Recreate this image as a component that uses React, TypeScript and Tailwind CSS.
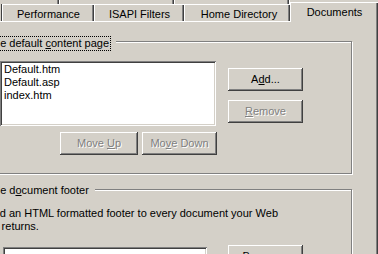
type BtnProps = {
  children: React.ReactNode;
  disabled?: boolean;
  className?: string;
};

function Button({ children, disabled, className = "" }: BtnProps) {
  return (
    <div
      className={`flex h-[23px] items-center justify-center bg-[#d4d0c8] leading-[13px] shadow-[inset_-1px_-1px_#404040,inset_1px_1px_#ffffff,inset_-2px_-2px_#808080] ${
        disabled ? "text-[#808080] [text-shadow:1px_1px_0_#ffffff]" : "text-black"
      } ${className}`}
    >
      <span>{children}</span>
    </div>
  );
}

function Tab({ label, className = "" }: { label: string; className?: string }) {
  return (
    <div
      className={`h-[18px] border-t border-b border-l border-white pt-[3px] text-center leading-[12px] shadow-[inset_-1px_0_#404040,inset_-2px_0_#808080] ${className}`}
    >
      {label}
    </div>
  );
}

export default function App() {
  return (
    <div className="h-[254px] w-[378px] overflow-hidden bg-[#d4d0c8] font-['Liberation_Sans',Arial,sans-serif] text-[11px] text-black">
      {/* back row of tabs */}
      <div className="flex h-[4px]">
        <div className="w-[59px] shadow-[inset_-1px_0_#404040,inset_-2px_0_#808080]" />
        <div className="w-[115px] border-l border-white shadow-[inset_-1px_0_#404040,inset_-2px_0_#808080]" />
        <div className="w-[115px] border-l border-white shadow-[inset_-1px_0_#404040,inset_-2px_0_#808080]" />
        <div className="flex-1 border-l border-white" />
      </div>

      {/* front row */}
      <div className="flex h-[18px] items-end">
        <div className="h-[18px] w-[2px] border-b border-white shadow-[inset_-1px_0_#404040]" />
        <Tab label="Performance" className="w-[92px]" />
        <Tab label="ISAPI Filters" className="w-[90px]" />
        <Tab label="Home Directory" className="w-[106px] pl-[3px]" />
        <div className="relative z-10 h-[20px] w-[88px] border-t border-l border-white bg-[#d4d0c8] pt-[3px] text-center leading-[12px] shadow-[inset_-1px_0_#404040,inset_-2px_0_#808080]">
          Documents
        </div>
      </div>

      {/* panel */}
      <div className="h-[232px] pt-[19px] shadow-[inset_-1px_0_#404040,inset_-2px_0_#808080]">
        {/* default content page */}
        <div className="relative -ml-[10px] w-[362px] border border-[#808080] pb-[18px] pl-[9px] pt-[19px] shadow-[inset_1px_1px_#ffffff,1px_1px_#ffffff]">
          <div className="absolute left-[-21px] top-[-6px] bg-[#d4d0c8] pr-[5px]">
            <span className="block border border-dotted border-black pl-[1px] pr-[1px] leading-[13px]">
              Enable default <u>c</u>ontent page
            </span>
          </div>

          <div className="flex items-start">
            <div className="h-[65px] w-[216px] bg-white pl-[4px] pt-[2px] leading-[13px] shadow-[inset_1px_1px_#808080,inset_-1px_-1px_#ffffff,inset_2px_2px_#404040,inset_-2px_-2px_#d4d0c8]">
              <div>Default.htm</div>
              <div>Default.asp</div>
              <div>index.htm</div>
            </div>
            <div className="ml-[12px] mt-[7px] flex flex-col gap-[9px]">
              <Button className="w-[75px]">
                A<u>d</u>d...
              </Button>
              <Button disabled className="w-[75px]">
                <u>R</u>emove
              </Button>
            </div>
          </div>

          <div className="mt-[6px] flex">
            <Button disabled className="ml-[60px] w-[78px]">
              Move <u>U</u>p
            </Button>
            <Button disabled className="ml-[4px] w-[75px]">
              Mo<u>v</u>e Down
            </Button>
          </div>
        </div>

        {/* document footer */}
        <div className="relative -ml-[10px] mt-[15px] w-[362px] border border-[#808080] pb-[20px] pl-[9px] pt-[17px] shadow-[inset_1px_1px_#ffffff,1px_1px_#ffffff]">
          <div className="absolute left-[-21px] top-[-7px] bg-[#d4d0c8] pr-[4px]">
            <span className="block border border-transparent pl-[1px] pr-[1px] leading-[13px]">
              Enable d<u>o</u>cument footer
            </span>
          </div>

          <p className="-ml-[32px] w-[340px] leading-[13px]">
            Append an HTML formatted footer to every document your Web server returns.
          </p>

          <div className="mt-[12px] flex items-start">
            <div className="ml-[3px] mt-[2px] h-[21px] w-[204px] bg-white shadow-[inset_1px_1px_#808080,inset_-1px_-1px_#ffffff,inset_2px_2px_#404040,inset_-2px_-2px_#d4d0c8]" />
            <Button className="ml-[21px] w-[75px]">
              <u>B</u>rowse...
            </Button>
          </div>
        </div>
      </div>
    </div>
  );
}
